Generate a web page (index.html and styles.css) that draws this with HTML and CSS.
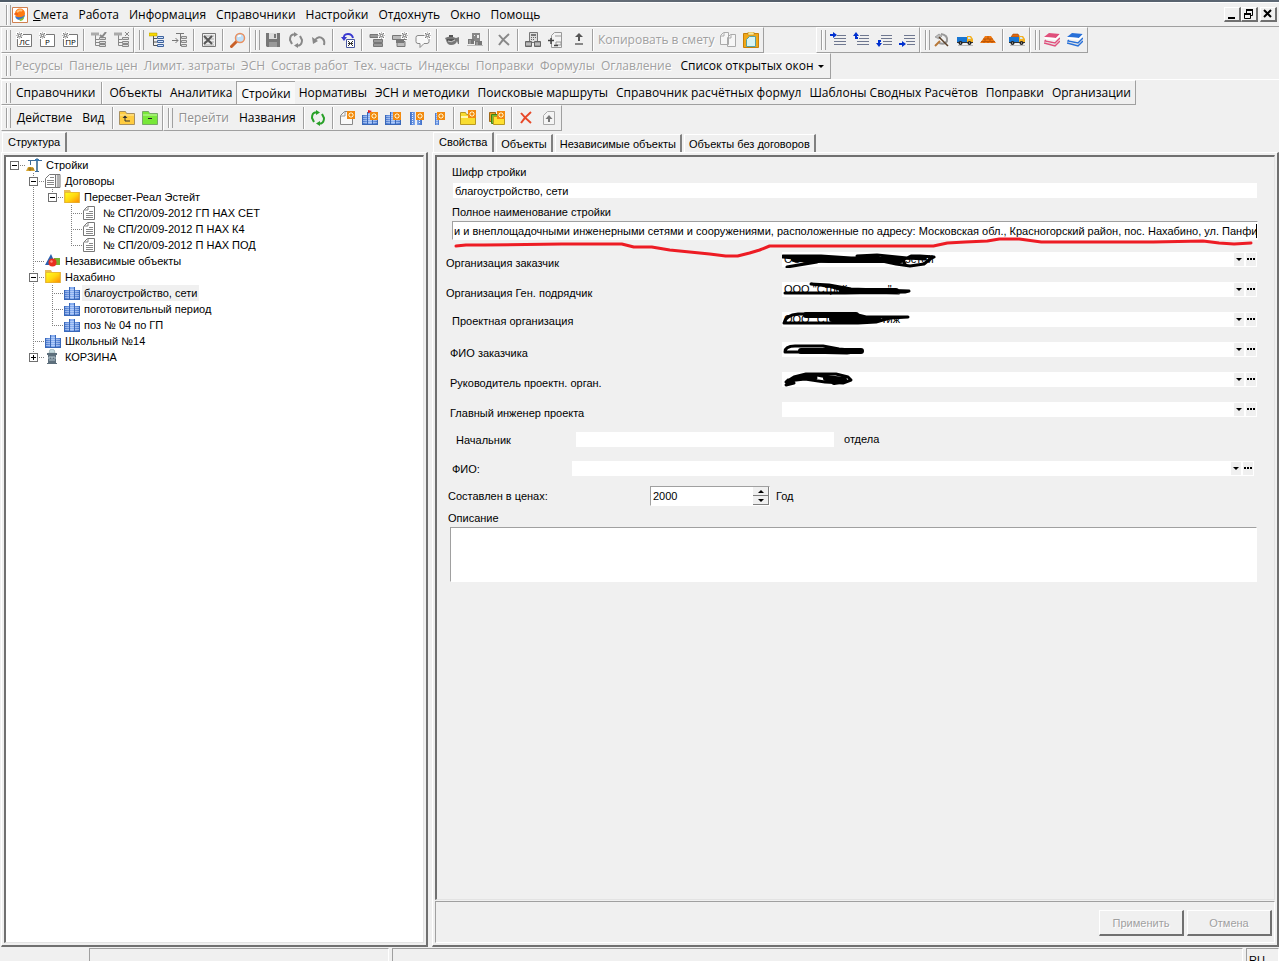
FILE: index.html
```html
<!DOCTYPE html>
<html lang="ru">
<head>
<meta charset="UTF-8">
<meta name="viewport" content="width=device-width, initial-scale=1.0">
<title>Стройки</title>
<link rel="stylesheet" href="styles.css">
</head>
<body>
<svg class="sprite" aria-hidden="true">
    <defs>
        <linearGradient id="gold" x1="0" y1="0" x2="1" y2="1"><stop offset="0" stop-color="#ffff20"/><stop offset=".5" stop-color="#ffd810"/><stop offset="1" stop-color="#ff8a00"/></linearGradient>
        <linearGradient id="blue"><stop offset="0" stop-color="#3f6fc8"/><stop offset=".5" stop-color="#8fb4f4"/><stop offset="1" stop-color="#3f6fc8"/></linearGradient>
    </defs>
    <symbol id="gear" viewBox="0 0 7 7"><path d="M0 0h7v7H0z" fill="#fff"/><path d="M1 1l1 1M6 1L5 2M1 6l1-1M6 6L5 5M3 0h1M3 7h1M0 3v1M7 3v1" stroke="#777"/><rect x="1.5" y="1.5" width="4" height="4" rx="1" fill="#999"/><path d="M3 3h1v1H3z" fill="#fff"/></symbol>
    <symbol id="star" viewBox="0 0 8 8"><path d="M0 0h8v8H0z" fill="#f28a10"/><path d="M4 1v6M1 4h6M2 2l4 4M6 2L2 6" stroke="#fff3c8"/><path d="M3 3h2v2H3z" fill="#f28a10"/></symbol>
    <symbol id="app" viewBox="0 0 16 16"><path d="M.5.5h15v15H.5z" fill="#fff" stroke="#d08050"/><circle cx="8" cy="6.500" r="5" fill="#ff7a10"/><path d="M3 9q5 3 10-1-1 5-5 5-4 0-5-4z" fill="#3a72c8"/><path d="M7 12q4 0 5-3v2q-1 3-4 3z" fill="#8ac43a"/><path d="M5 5q3-3 5-1" fill="none" stroke="#ffc080" stroke-width="2"/><path d="M2 7h4" stroke="#e84818"/></symbol>
    <symbol id="box" viewBox="0 0 16 16"><path d="M1.500 2.500h14v12h-14z" fill="#fff" stroke="#777"/><use href="#gear" x="0" y="0" width="7" height="7"/></symbol>
    <symbol id="tree" viewBox="0 0 16 16"><path d="M4.500 2v11.500H8M4.500 7.500H8M4.500 10.500H8" fill="none" stroke="#888"/><path d="M0 .5h8v3H0z" fill="#aaa"/><path d="M8.500 5.500h6v2h-6zM8.500 9.500h6v2h-6zM8.500 12.500h6v2h-6z" fill="#ddd" stroke="#888"/></symbol>
    <symbol id="tree-ok" viewBox="0 0 16 16"><use href="#tree"/><path d="M9 3l2 2 4-5" fill="none" stroke="#888" stroke-width="2"/></symbol>
    <symbol id="tree-no" viewBox="0 0 16 16"><use href="#tree"/><path d="M11 0l4 4M15 0l-4 4" stroke="#888"/></symbol>
    <symbol id="tree-color" viewBox="0 0 16 16"><path d="M4.500 3v10.500H8M4.500 6.500H8M4.500 10H8" fill="none" stroke="#555"/><path d="M0 1h8v3H0z" fill="#f8d800" stroke="#a89000" stroke-width=".5"/><path d="M8.500 4.500h6v2h-6zM8.500 8.500h6v2h-6zM8.500 12.500h6v2h-6z" fill="#cfe2ff" stroke="#3f639c"/></symbol>
    <symbol id="tree-in" viewBox="0 0 16 16"><path d="M0 8.500h6M3.500 6L6 8.500 3.500 11M4 1.500h8M8.500 2v12" fill="none" stroke="#777"/><path d="M9.500 4.500h5v2h-5zM9.500 8.500h5v2h-5zM9.500 12.500h5v2h-5z" fill="#ddd" stroke="#888"/></symbol>
    <symbol id="excel" viewBox="0 0 16 16"><path d="M1.500 1.500h13v13h-13z" fill="#eee" stroke="#777"/><path d="M3 4h10M3 7h10M3 10h10M3 13h10" stroke="#aaa"/><path d="M3 4l8 8M11 4l-8 8" stroke="#555" stroke-width="2"/></symbol>
    <symbol id="find" viewBox="0 0 16 16"><path d="M1.500 14.500L7 9" stroke="#c86028" stroke-width="3" stroke-linecap="round"/><circle cx="10" cy="6" r="4.500" fill="#bfe0fa" stroke="#e89060" stroke-width="1.500"/><path d="M8 5q1-2 3-1" fill="none" stroke="#fff" stroke-width="1.500"/></symbol>
    <symbol id="save" viewBox="0 0 16 16"><path d="M1 1h14v14H2l-1-1z" fill="#777"/><path d="M4 1h8v6H4z" fill="#ddd"/><path d="M9 2h2v4H9z" fill="#777"/><path d="M4 10h8v5H4z" fill="#999"/></symbol>
    <symbol id="refresh" viewBox="0 0 16 16"><path d="M7 2.500H5Q2 3 2 8l2 4M9 13.500h2q3-1 3-5.500l-2-4" fill="none" stroke="currentColor" stroke-width="2"/><path d="M6 0l4 2.500L6 5zM10 11v5l-4-2.500z" fill="currentColor"/></symbol>
    <symbol id="undo" viewBox="0 0 16 16"><path d="M4 8q4-5 8-1 2 2 1 6" fill="none" stroke="#888" stroke-width="2"/><path d="M1 5l1 7 5-3z" fill="#888"/></symbol>
    <symbol id="recalc" viewBox="0 0 16 16"><path d="M4 7q-1-5 4-5 4 0 5 4" fill="none" stroke="#3838d0" stroke-width="2"/><path d="M1 5h6L4 9z" fill="#3838d0"/><path d="M6.500 7.500h8v8h-8z" fill="#fff" stroke="#4858a0"/><path d="M8 9l5 5M13 9l-5 5M8 11.500h5" stroke="#333"/></symbol>
    <symbol id="rows" viewBox="0 0 16 16"><path d="M1 2.500h12v3H1zM4.500 7.500h9v3h-9zM4.500 11.500h9v3h-9z" fill="#999" stroke="#777"/><use href="#gear" x="9" y="0" width="7" height="7"/></symbol>
    <symbol id="rows2" viewBox="0 0 16 16"><path d="M.5 3.500h14v4H.5zM5 9.500h8v5H5z" fill="#bbb" stroke="#777"/><path d="M4 8h8v3H4z" fill="#777"/><use href="#gear" x="9" y="0" width="7" height="7"/></symbol>
    <symbol id="note" viewBox="0 0 16 16"><path d="M3 3.500h9q2 0 2 2v4q0 2-2 2H9l-4 4v-4H3q-2 0-2-2v-4q0-2 2-2z" fill="#f8f8f8" stroke="#888"/><use href="#gear" x="9" y="0" width="7" height="7"/></symbol>
    <symbol id="pot" viewBox="0 0 16 16"><path d="M1 6q5-3 11 0l3-1v7h-1l-1-3q-1 4-6 4-4 0-5-5z" fill="#777"/><path d="M5 4h4M3 8h7" stroke="#555" stroke-width="2"/><path d="M4 9q3 2 7-1" stroke="#ccc" fill="none"/></symbol>
    <symbol id="plant" viewBox="0 0 16 16"><path d="M5 1h8v8H5z" fill="#888"/><path d="M7 3h1v1H7zM10 3h2v3h-2z" fill="#eee"/><path d="M1 7h6v5H1zM8 9h7v5H8z" fill="#777"/><path d="M0 13.500h16M3 8v4M10 10v3" stroke="#bbb"/></symbol>
    <symbol id="cross" viewBox="0 0 16 16"><path d="M3 3q4 5 10 10M13 2Q7 7 3 13" fill="none" stroke="currentColor" stroke-width="2"/></symbol>
    <symbol id="calc" viewBox="0 0 16 16"><path d="M4.500.5h8v10h-8z" fill="#ddd" stroke="#777"/><path d="M6 2h5v2H6z" fill="#777"/><path d="M6 5.500h1M8 5.500h1M10 5.500h1M6 7.500h1M8 7.500h1" stroke="#666"/><path d="M.5 9.500h6v5h-6zM9.500 9.500h6v5h-6z" fill="#999" stroke="#666"/><path d="M1 12h5M10 12h5" stroke="#ddd"/></symbol>
    <symbol id="plusdoc" viewBox="0 0 16 16"><path d="M3.500 3.500l3-3h7v15h-10z" fill="#f4f4f4" stroke="#999"/><path d="M7 4h6M8 10h5v3H8z" fill="none" stroke="#999"/><path d="M0 8.500h6M3 6v6M6 13.500h4" stroke="#444" stroke-width="1.500"/></symbol>
    <symbol id="updown" viewBox="0 0 16 16"><path d="M8 1l4 4H9v4H7V5H4z" fill="#555"/><path d="M4 11h8v2H4z" fill="#888"/></symbol>
    <symbol id="copy" viewBox="0 0 16 16"><path d="M.5 3.500l3-3h5v12h-8zM7.500 5.500l3-3h5v12h-8z" fill="#f6f6f6" stroke="#aaa"/><path d="M1 4h3V1M8 6h3V3" fill="none" stroke="#aaa"/></symbol>
    <symbol id="paste" viewBox="0 0 16 16"><path d="M.5 1.500h15v14H.5z" fill="#f0a818" stroke="#c88008"/><path d="M5 0h6v3H5z" fill="#ffe890" stroke="#b08020" stroke-width=".5"/><path d="M3.500 7.500l3-3h6v10h-9z" fill="#d8f4f4" stroke="#58a0a0"/></symbol>
    <symbol id="ind1" viewBox="0 0 16 16"><path d="M7 3.500h9M4 6.500h12M4 9.500h12M4 12.500h12" stroke="#6f7890"/><path d="M0 3h4" stroke="#0030d0" stroke-width="2"/><path d="M3 0l4 3-4 3z" fill="#0030d0"/></symbol>
    <symbol id="ind2" viewBox="0 0 16 16"><path d="M7 3.500h9M6 6.500h10M4 9.500h12M4 12.500h12" stroke="#6f7890"/><path d="M3 2v4h2" fill="none" stroke="#0030d0" stroke-width="2"/><path d="M0 4l3-4 3 4z" fill="#0030d0"/></symbol>
    <symbol id="ind3" viewBox="0 0 16 16"><path d="M5 3.500h11M5 6.500h11M7 9.500h9M7 12.500h9" stroke="#6f7890"/><path d="M5 9H3v3" fill="none" stroke="#0030d0" stroke-width="2"/><path d="M0 11h6l-3 4z" fill="#0030d0"/></symbol>
    <symbol id="ind4" viewBox="0 0 16 16"><path d="M5 3.500h11M5 6.500h11M7 9.500h9M8 12.500h8" stroke="#6f7890"/><path d="M0 12h4" stroke="#0030d0" stroke-width="2"/><path d="M3 9l4 3-4 3z" fill="#0030d0"/></symbol>
    <symbol id="hammer" viewBox="0 0 16 16"><path d="M7 2q7 1 6 7-2 4-8 2" fill="none" stroke="#999" stroke-width="2"/><path d="M1 5l4-3 3 2-3 3z" fill="#bbb" stroke="#777" stroke-width=".5"/><path d="M5 5l9 9" stroke="#5b4028" stroke-width="1.500"/><path d="M1 14l5-5" stroke="#b87838" stroke-width="2"/></symbol>
    <symbol id="truck" viewBox="0 0 16 16"><path d="M1 13.500h15" stroke="#bbb"/><path d="M0 5h10v6H0z" fill="#1976d2"/><path d="M10 4h4l2 3v4h-6z" fill="#f4b020"/><path d="M11 5h2l1 2h-3z" fill="#d0e8f8"/><path d="M0 10h16v1H0z" fill="#333"/><circle cx="3.500" cy="11" r="2" fill="#222"/><circle cx="12.500" cy="11" r="2" fill="#222"/><path d="M3 11h1M12 11h1" stroke="#ddd"/></symbol>
    <symbol id="bricks" viewBox="0 0 16 16"><path d="M5 4h6l2 3 3 4H0l3-4z" fill="#f07810"/><path d="M3 7h10M1 9.500h14M8 4v3M5 7v2M10 7v2M4 10v1M8 10v1M12 10v1" stroke="#a84800" stroke-width=".7"/></symbol>
    <symbol id="truck-load" viewBox="0 0 16 16"><path d="M2 5l2-3h5l2 3z" fill="#e06810" stroke="#904000" stroke-width=".5"/><use href="#truck"/></symbol>
    <symbol id="books" viewBox="0 0 16 16"><path d="M5 1l11 1-4 4-12-1z" fill="currentColor"/><path d="M0 5l12 1v2L1 7zM12 6l4-4v2l-4 4z" fill="#fff"/><path d="M2 8l-1 1 10 2 5-5" fill="none" stroke="currentColor" stroke-width="1.500"/><path d="M1 10l10 2v1L1 11z" fill="#ddd"/><path d="M0 11l11 3 5-5" fill="none" stroke="currentColor" stroke-width="1.500"/></symbol>
    <symbol id="fold-up" viewBox="0 0 16 16"><path d="M.5 14.500v-13h6l1 2h8v11z" fill="#ffcc40" stroke="#a89060"/><path d="M1 5h14" stroke="#ffe8a0"/><path d="M6 6v5h5" fill="none" stroke="#333"/><path d="M3.500 8L6 5.500 8.500 8z" fill="#333"/></symbol>
    <symbol id="fold-minus" viewBox="0 0 16 16"><path d="M.5 14.500v-13h6l1 2h8v11z" fill="#78e838" stroke="#78a868"/><path d="M1 5h14" stroke="#c8f8a8"/><path d="M6 8.500h4" stroke="#222"/></symbol>
    <symbol id="newdoc" viewBox="0 0 16 16"><path d="M1.500 5.500l4-4h8v13h-12z" fill="#f8f8f8" stroke="#888"/><path d="M2 6h4V2" fill="none" stroke="#999"/><use href="#star" x="8" y="1" width="8" height="8"/></symbol>
    <symbol id="city" viewBox="0 0 16 16"><path d="M0 5h5v10H0zM5 2h6v13H5zM11 5h5v10h-5z" fill="url(#blue)"/><path d="M2 6v8M4 6v8M7 4v10M9 4v10M12 6v8M14 6v8" stroke="#dce9ff" stroke-dasharray="1 1"/><path d="M.5 5v10M5.500 2v13M10.500 2v13M15.500 5v10M0 14.500h16" stroke="#3a68b8" fill="none"/></symbol>
    <symbol id="city-flag" viewBox="0 0 16 16"><use href="#city"/><path d="M6 3V0l4 1-3 2" fill="#e02020"/><use href="#star" x="8" y="2" width="8" height="8"/></symbol>
    <symbol id="city-new" viewBox="0 0 16 16"><use href="#city"/><use href="#star" x="8" y="2" width="8" height="8"/></symbol>
    <symbol id="tower-new" viewBox="0 0 16 16"><path d="M2 2h5v13H2zM9 9h5v6H9z" fill="url(#blue)"/><path d="M4.500 3v11M11.500 10v4" stroke="#e8f2ff" stroke-dasharray="1 1"/><use href="#star" x="8" y="2" width="8" height="8"/></symbol>
    <symbol id="part-new" viewBox="0 0 16 16"><path d="M4 3h4v12H4z" fill="url(#blue)"/><path d="M6 4v10" stroke="#e8f2ff" stroke-dasharray="1 1"/><use href="#star" x="6" y="2" width="8" height="8"/></symbol>
    <symbol id="fold-new" viewBox="0 0 16 16"><path d="M.5 14.500v-12h5l1 2h9v10z" fill="#f8dc30" stroke="#b89820"/><path d="M1 7h14" stroke="#fff8b0" stroke-width="2"/><use href="#star" x="8" y="0" width="8" height="8"/></symbol>
    <symbol id="folds-new" viewBox="0 0 16 16"><path d="M.5 2.500h6v9h-6z" fill="#f0a020" stroke="#a06818"/><path d="M2.500 4.500h6v9h-6z" fill="#70c030" stroke="#408018"/><path d="M4.500 6.500h11v8h-11z" fill="#ffe030" stroke="#b89820"/><use href="#star" x="8" y="1" width="8" height="8"/></symbol>
    <symbol id="doc-up" viewBox="0 0 16 16"><path d="M2.500 5.500l4-4h7v13h-11z" fill="#f4f4f4" stroke="#aaa"/><path d="M8 12V7" stroke="#777" stroke-width="2"/><path d="M4.500 9L8 5l3.500 4z" fill="#777"/></symbol>
    <symbol id="crane" viewBox="0 0 16 16"><path d="M2 3.500h14M4.500 3v5M9 14.500h4" stroke="#3f6c98" fill="none"/><path d="M10 2h2v12h-2z" fill="#88b0d0"/><path d="M11 1v13" stroke="#345c80"/><path d="M9 2h4v2H9z" fill="#3878b0"/><path d="M0 14l2-4h5l2 4z" fill="#d8a830"/><path d="M2 12h6M4 10v4" stroke="#906818"/></symbol>
    <symbol id="docs" viewBox="0 0 16 16"><path d="M10 1.500h5v13h-5M13 1v13" fill="#eee" stroke="#777"/><path d="M.5 5.500l4-4h6v13H.5z" fill="#fff" stroke="#777"/><path d="M5 4.500h4M2 7.500h7M2 9.500h7M2 11.500h7" stroke="#888"/></symbol>
    <symbol id="folder" viewBox="0 0 16 16"><path d="M0 4V1h6l1 2h9v11H0z" fill="#e8bc58"/><path d="M1 3.500h14v10H1z" fill="url(#gold)" stroke="#e0a820" stroke-width=".5"/></symbol>
    <symbol id="page" viewBox="0 0 16 16"><path d="M.5 5.500l4-4h7v13H.5z" fill="#fff" stroke="#777"/><path d="M1 5h4V2M6 6.500h4M3 8.500h7M3 10.500h7M3 12.500h7" fill="none" stroke="#888"/></symbol>
    <symbol id="shapes" viewBox="0 0 16 16"><path d="M9 5h6v7H9z" fill="#78b030"/><path d="M6 1l5 11H0z" fill="#2860b0"/><circle cx="7.500" cy="9.500" r="4" fill="#e83020"/><circle cx="6.500" cy="8.500" r="1.200" fill="#ff9080"/></symbol>
    <symbol id="bin" viewBox="0 0 16 16"><path d="M4 4q0-4 3-4t3 4z" fill="#c8dce0" stroke="#80989c" stroke-width=".5"/><path d="M2 4h10v2H2zM3 6h8v8H3zM2 14h10v1H2z" fill="#5d6f7c"/><path d="M5 7v6M7 7v6M9 7v6M3 9h8" stroke="#b8c8d0" stroke-dasharray="2 1"/></symbol>
</svg>

<div class="strip"></div>

<nav class="bar menu">
    <div class="group">
        <svg class="logo"><use href="#app"/></svg>
        <a href="#"><u>С</u>мета</a>
        <a href="#">Работа</a>
        <a href="#">Информация</a>
        <a href="#">Справочники</a>
        <a href="#">Настройки</a>
        <a href="#">Отдохнуть</a>
        <a href="#">Окно</a>
        <a href="#">Помощь</a>
    </div>
    <div class="window-buttons">
        <button type="button" aria-label="Свернуть"><svg viewBox="0 0 12 12"><path d="M2 10h7" stroke="#000" stroke-width="2"/></svg></button>
        <button type="button" aria-label="Восстановить"><svg viewBox="0 0 12 12"><path d="M3 2h7M1 6h7" stroke="#000" stroke-width="2"/><path d="M3.500 3v2M9.500 3v4.500H8M1.500 7v3.500h6V7" fill="none" stroke="#000"/></svg></button>
        <button type="button" class="close" aria-label="Закрыть"><svg viewBox="0 0 12 12"><path d="M2 2l7 7M9 2L2 9" stroke="#000" stroke-width="2"/></svg></button>
    </div>
</nav>

<div class="bar">
    <div class="group">
        <button type="button" class="tool lettered"><svg><use href="#box"/></svg><span>ЛС</span></button>
        <button type="button" class="tool lettered"><svg><use href="#box"/></svg><span>Р</span></button>
        <button type="button" class="tool lettered"><svg><use href="#box"/></svg><span>ПР</span></button>
        <i class="sep"></i>
        <button type="button" class="tool" aria-label="Отметить"><svg><use href="#tree-ok"/></svg></button>
        <button type="button" class="tool" aria-label="Снять отметку"><svg><use href="#tree-no"/></svg></button>
    </div>
    <div class="group">
        <button type="button" class="tool" aria-label="Структура"><svg><use href="#tree-color"/></svg></button>
        <button type="button" class="tool" aria-label="Вставить в структуру"><svg><use href="#tree-in"/></svg></button>
        <i class="sep"></i>
        <button type="button" class="tool" aria-label="Excel"><svg><use href="#excel"/></svg></button>
        <i class="sep"></i>
        <button type="button" class="tool" aria-label="Поиск"><svg><use href="#find"/></svg></button>
    </div>
    <div class="group">
        <button type="button" class="tool" aria-label="Сохранить"><svg><use href="#save"/></svg></button>
        <button type="button" class="tool gray" aria-label="Обновить"><svg><use href="#refresh"/></svg></button>
        <button type="button" class="tool" aria-label="Отменить"><svg><use href="#undo"/></svg></button>
        <i class="sep"></i>
        <button type="button" class="tool" aria-label="Пересчитать"><svg><use href="#recalc"/></svg></button>
        <i class="sep"></i>
        <button type="button" class="tool" aria-label="Новый раздел"><svg><use href="#rows"/></svg></button>
        <button type="button" class="tool" aria-label="Новая строка"><svg><use href="#rows2"/></svg></button>
        <button type="button" class="tool" aria-label="Комментарий"><svg><use href="#note"/></svg></button>
        <i class="sep"></i>
        <button type="button" class="tool" aria-label="Материалы"><svg><use href="#pot"/></svg></button>
        <button type="button" class="tool" aria-label="Оборудование"><svg><use href="#plant"/></svg></button>
        <i class="sep"></i>
        <button type="button" class="tool gray" aria-label="Удалить"><svg><use href="#cross"/></svg></button>
        <i class="sep"></i>
        <button type="button" class="tool" aria-label="Калькулятор"><svg><use href="#calc"/></svg></button>
        <button type="button" class="tool" aria-label="Поправка"><svg><use href="#plusdoc"/></svg></button>
        <button type="button" class="tool" aria-label="Сдвиг"><svg><use href="#updown"/></svg></button>
        <i class="sep"></i>
        <button type="button" class="text-tool copy-to" disabled>Копировать в смету</button>
        <button type="button" class="tool" aria-label="Копировать"><svg><use href="#copy"/></svg></button>
        <button type="button" class="tool" aria-label="Вставить"><svg><use href="#paste"/></svg></button>
    </div>
    <div class="group apart">
        <button type="button" class="tool" aria-label="Уровень 1"><svg><use href="#ind1"/></svg></button>
        <button type="button" class="tool" aria-label="Уровень 2"><svg><use href="#ind2"/></svg></button>
        <button type="button" class="tool" aria-label="Уровень 3"><svg><use href="#ind3"/></svg></button>
        <button type="button" class="tool" aria-label="Уровень 4"><svg><use href="#ind4"/></svg></button>
    </div>
    <div class="group">
        <button type="button" class="tool" aria-label="Работы"><svg><use href="#hammer"/></svg></button>
        <button type="button" class="tool" aria-label="Машины"><svg><use href="#truck"/></svg></button>
        <button type="button" class="tool" aria-label="Кирпич"><svg><use href="#bricks"/></svg></button>
        <i class="sep"></i>
        <button type="button" class="tool" aria-label="Перевозка"><svg><use href="#truck-load"/></svg></button>
    </div>
    <div class="group">
        <button type="button" class="tool pink" aria-label="Сборники"><svg><use href="#books"/></svg></button>
        <button type="button" class="tool azure" aria-label="Каталоги"><svg><use href="#books"/></svg></button>
    </div>
</div>

<div class="bar panels">
    <div class="group">
        <button type="button" disabled>Ресурсы</button>
        <button type="button" disabled>Панель цен</button>
        <button type="button" disabled>Лимит. затраты</button>
        <button type="button" disabled>ЭСН</button>
        <button type="button" disabled>Состав работ</button>
        <button type="button" disabled>Тех. часть</button>
        <button type="button" disabled>Индексы</button>
        <button type="button" disabled>Поправки</button>
        <button type="button" disabled>Формулы</button>
        <button type="button" disabled>Оглавление</button>
        <button type="button" class="windows">Список открытых окон<i class="arrow"></i></button>
    </div>
</div>

<nav class="bar books">
    <div class="group">
        <a href="#">Справочники</a>
        <i class="sep"></i>
        <a href="#">Объекты</a>
        <a href="#">Аналитика</a>
        <a href="#" class="pressed">Стройки</a>
        <a href="#">Нормативы</a>
        <a href="#">ЭСН и методики</a>
        <a href="#">Поисковые маршруты</a>
        <a href="#">Справочник расчётных формул</a>
        <a href="#">Шаблоны Сводных Расчётов</a>
        <a href="#">Поправки</a>
        <a href="#">Организации</a>
    </div>
</nav>

<div class="bar actions">
    <div class="group">
        <button type="button" class="text-tool">Действие</button>
        <button type="button" class="text-tool">Вид</button>
        <i class="sep"></i>
        <button type="button" class="tool" aria-label="На уровень вверх"><svg><use href="#fold-up"/></svg></button>
        <button type="button" class="tool" aria-label="Свернуть всё"><svg><use href="#fold-minus"/></svg></button>
    </div>
    <div class="group">
        <button type="button" class="text-tool pale" disabled>Перейти</button>
        <button type="button" class="text-tool">Названия</button>
        <i class="sep"></i>
        <button type="button" class="tool green" aria-label="Обновить"><svg><use href="#refresh"/></svg></button>
        <i class="sep"></i>
        <button type="button" class="tool" aria-label="Новый документ"><svg><use href="#newdoc"/></svg></button>
        <button type="button" class="tool" aria-label="Новая стройка"><svg><use href="#city-flag"/></svg></button>
        <button type="button" class="tool" aria-label="Новая очередь"><svg><use href="#city-new"/></svg></button>
        <button type="button" class="tool" aria-label="Новый объект"><svg><use href="#tower-new"/></svg></button>
        <button type="button" class="tool" aria-label="Новая часть"><svg><use href="#part-new"/></svg></button>
        <i class="sep"></i>
        <button type="button" class="tool" aria-label="Новая папка"><svg><use href="#fold-new"/></svg></button>
        <i class="sep"></i>
        <button type="button" class="tool" aria-label="Новая группа папок"><svg><use href="#folds-new"/></svg></button>
        <i class="sep"></i>
        <button type="button" class="tool red" aria-label="Удалить"><svg><use href="#cross"/></svg></button>
        <button type="button" class="tool" aria-label="Выгрузить"><svg><use href="#doc-up"/></svg></button>
    </div>
</div>

<main>
    <section class="pane">
        <div class="tabs">
            <button type="button" class="active">Структура</button>
        </div>
        <div class="frame">
            <ul class="tree">
                <li>
                    <div class="node"><button type="button" aria-label="Свернуть"></button><svg><use href="#crane"/></svg><span>Стройки</span></div>
                    <ul>
                        <li>
                            <div class="node"><button type="button" aria-label="Свернуть"></button><svg><use href="#docs"/></svg><span>Договоры</span></div>
                            <ul>
                                <li>
                                    <div class="node"><button type="button" aria-label="Свернуть"></button><svg><use href="#folder"/></svg><span>Пересвет-Реал Эстейт</span></div>
                                    <ul>
                                        <li><div class="node"><svg><use href="#page"/></svg><span>№ СП/20/09-2012 ГП НАХ СЕТ</span></div></li>
                                        <li><div class="node"><svg><use href="#page"/></svg><span>№ СП/20/09-2012 П НАХ К4</span></div></li>
                                        <li><div class="node"><svg><use href="#page"/></svg><span>№ СП/20/09-2012 П НАХ ПОД</span></div></li>
                                    </ul>
                                </li>
                            </ul>
                        </li>
                        <li><div class="node"><svg><use href="#shapes"/></svg><span>Независимые объекты</span></div></li>
                        <li>
                            <div class="node"><button type="button" aria-label="Свернуть"></button><svg><use href="#folder"/></svg><span>Нахабино</span></div>
                            <ul>
                                <li><div class="node selected"><svg><use href="#city"/></svg><span>благоустройство, сети</span></div></li>
                                <li><div class="node"><svg><use href="#city"/></svg><span>поготовительный период</span></div></li>
                                <li><div class="node"><svg><use href="#city"/></svg><span>поз № 04 по ГП</span></div></li>
                            </ul>
                        </li>
                        <li><div class="node"><svg><use href="#city"/></svg><span>Школьный №14</span></div></li>
                        <li><div class="node"><button type="button" class="plus" aria-label="Развернуть"></button><svg><use href="#bin"/></svg><span>КОРЗИНА</span></div></li>
                    </ul>
                </li>
            </ul>
        </div>
    </section>

    <section class="pane">
        <div class="tabs">
            <button type="button" class="active">Свойства</button>
            <button type="button">Объекты</button>
            <button type="button">Независимые объекты</button>
            <button type="button">Объекты без договоров</button>
        </div>
        <form class="frame">
            <div class="fields">
                <div class="stack">
                    <label for="code">Шифр стройки</label>
                    <input id="code" type="text" value="благоустройство, сети">
                </div>
                <div class="stack">
                    <label for="fullname">Полное наименование стройки</label>
                    <input id="fullname" class="sunken" type="text" value="и и внеплощадочными инженерными сетями и сооружениями, расположенные по адресу: Московская обл., Красногорский район, пос. Нахабино, ул. Панфи">
                    <i class="caret"></i>
                    <svg class="underline" viewBox="0 0 806 24" preserveAspectRatio="none"><path d="M4 12l10-1h18l78-1h60l12 3h18l18 3 20 2 20 2 16 2h12l12-3 10-3 10-4h30l134 0 14-3 18-1 22-1 12-2h20l22 3h112l50-1 16 2 15 1 17-1"/></svg>
                </div>
                <div class="row near">
                    <label for="customer">Организация заказчик</label>
                    <div class="lookup">
                        <input id="customer" type="text" value='ООО "                             эстей'>
                        <button type="button" aria-label="Список"><i class="arrow"></i></button><button type="button" aria-label="Выбрать"><i class="dots"></i></button>
                        <svg class="scribble" viewBox="0 0 160 16"><path d="M1 4l38 0 60 4-60 1-34 6 30-5M1 5l44 4 55 0 14 3 14 2 14-2 6-5 4-2-14-1-9 0-8 4 2 4M36 6h60l16 5M75 4l20-1 30 3 18 1"/><path d="M12 7l35 1 72 0" class="fat"/></svg>
                    </div>
                </div>
                <div class="row near">
                    <label for="contractor">Организация Ген. подрядчик</label>
                    <div class="lookup">
                        <input id="contractor" type="text" value='ООО "Строй             "'>
                        <button type="button" aria-label="Список"><i class="arrow"></i></button><button type="button" aria-label="Выбрать"><i class="dots"></i></button>
                        <svg class="scribble" viewBox="0 0 160 16"><path d="M3 11h60l60-1 4-1-58-2-22-4-18-1 18 2 20 6 50 1"/><path d="M60 9l54 0" class="fat"/></svg>
                    </div>
                </div>
                <div class="row mid">
                    <label for="designer">Проектная организация</label>
                    <div class="lookup">
                        <input id="designer" type="text" value='ООО "Ст                 тиж'>
                        <button type="button" aria-label="Список"><i class="arrow"></i></button><button type="button" aria-label="Выбрать"><i class="dots"></i></button>
                        <svg class="scribble" viewBox="0 0 160 16"><path d="M2 11q2-8 14-9h56l12 3 42 0-18 1-14 4-18 1H3"/><path d="M50 7h46l-20 2H58M24 3h50" class="fat"/></svg>
                    </div>
                </div>
                <div class="row">
                    <label for="customer-name">ФИО заказчика</label>
                    <div class="lookup">
                        <input id="customer-name" type="text" value="">
                        <button type="button" aria-label="Список"><i class="arrow"></i></button><button type="button" aria-label="Выбрать"><i class="dots"></i></button>
                        <svg class="scribble" viewBox="0 0 160 16"><path d="M3 10q0-6 10-6l28 0 16 3 22 2-14 2-44-1H4M20 8h20"/><path d="M19 9h50l10 0" class="fat"/></svg>
                    </div>
                </div>
                <div class="row">
                    <label for="head">Руководитель проектн. орган.</label>
                    <div class="lookup">
                        <input id="head" type="text" value="">
                        <button type="button" aria-label="Список"><i class="arrow"></i></button><button type="button" aria-label="Выбрать"><i class="dots"></i></button>
                        <svg class="scribble" viewBox="0 0 160 16"><path d="M4 13l8-2-8-1 8-5 12-3 30 0 12 3 3 3-8 3-18-1-20-3-18 2 30-6 26 5M6 8l28-2"/><path d="M44 6l18 2-10 2" class="fat"/></svg>
                    </div>
                </div>
                <div class="row">
                    <label for="engineer">Главный инженер проекта</label>
                    <div class="lookup">
                        <input id="engineer" type="text" value="">
                        <button type="button" aria-label="Список"><i class="arrow"></i></button><button type="button" aria-label="Выбрать"><i class="dots"></i></button>
                    </div>
                </div>
                <div class="row chief">
                    <label for="chief">Начальник</label>
                    <input id="chief" type="text">
                    <span>отдела</span>
                </div>
                <div class="row fio">
                    <label for="fio">ФИО:</label>
                    <div class="lookup">
                        <input id="fio" type="text">
                        <button type="button" aria-label="Список"><i class="arrow"></i></button><button type="button" aria-label="Выбрать"><i class="dots"></i></button>
                    </div>
                </div>
                <div class="row year">
                    <label for="year">Составлен в ценах:</label>
                    <div class="spin sunken">
                        <input id="year" type="text" value="2000">
                        <div><button type="button" aria-label="Больше"><i class="arrow up"></i></button><button type="button" aria-label="Меньше"><i class="arrow"></i></button></div>
                    </div>
                    <span>Год</span>
                </div>
                <div class="about">
                    <label for="about">Описание</label>
                    <textarea id="about" class="sunken"></textarea>
                </div>
            </div>
            <div class="footer">
                <button type="submit" disabled>Применить</button>
                <button type="reset" disabled>Отмена</button>
            </div>
        </form>
    </section>
</main>

<footer class="status">
    <div></div>
    <div></div>
    <div>RU</div>
</footer>
</body>
</html>
```
FILE: styles.css
```css
*, *::before {
    box-sizing: border-box;
}
body {
    margin: 0;
    height: 100vh;
    display: flex;
    flex-direction: column;
    overflow: hidden;
    background: #f0f0f0;
    color: #000;
    font-family: "Liberation Sans", Arial, sans-serif;
    font-size: 11px;
}
button, input, textarea {
    font: inherit;
    color: inherit;
    margin: 0;
    padding: 0;
    border: 0;
    border-radius: 0;
    outline: none;
}
button {
    background: none;
    white-space: nowrap;
}
button:disabled {
    color: #a0a0a0;
    text-shadow: 1px 1px #fff;
}
svg {
    width: 16px;
    height: 16px;
    flex: none;
}
.sprite {
    position: absolute;
    width: 0;
    height: 0;
}
.strip {
    height: 2px;
    flex: none;
    background: linear-gradient(90deg, #4e5a66, #6d757e 40%, #4c5663 70%, #5d6874);
}

/* toolbars */
.bar {
    height: 26px;
    flex: none;
    display: flex;
    padding-left: 1px;
    font-family: "Open Sans", "Noto Sans", sans-serif;
    font-size: 12px;
    line-height: 16px;
}
.menu {
    height: 25px;
    justify-content: space-between;
    border-top: 1px solid #fff;
    border-bottom: 1px solid #a0a0a0;
}
.group {
    display: flex;
    align-items: center;
    border: 1px solid #a0a0a0;
    border-top-color: #fff;
    border-left-color: #fff;
    white-space: nowrap;
}
.group::before {
    content: "";
    width: 5px;
    height: 20px;
    margin: 0 1px 0 4px;
    border: solid #a0a0a0;
    border-width: 0 1px;
    background: linear-gradient(90deg, #fff 1px, #f0f0f0 1px);
}
.group.apart {
    margin-left: 52px;
}
.menu .group {
    border: 0;
    padding-left: 1px;
}
.menu a, .books a {
    padding: 0 5px;
    color: #000;
    text-decoration: none;
}
.books .group a {
    padding: 0 4px;
}
.window-buttons {
    display: flex;
    align-items: center;
    padding-right: 2px;
}
.window-buttons button {
    width: 17px;
    height: 15px;
    display: flex;
    align-items: center;
    justify-content: center;
    border: 1px solid #fff;
    border-right: 2px solid #707070;
    border-bottom: 2px solid #707070;
}
.window-buttons .close {
    margin-left: 2px;
}
.window-buttons svg {
    width: 12px;
    height: 12px;
}
.tool {
    width: 23px;
    height: 22px;
    display: flex;
    align-items: center;
    justify-content: center;
}
.lettered {
    display: grid;
    place-items: center;
    place-content: center;
}
.lettered svg, .lettered span {
    grid-area: 1 / 1;
}
.lettered span {
    z-index: 1;
    font-size: 8px;
    line-height: 8px;
    padding: 4px 0 0 2px;
}
.gray { color: #888; }
.pink { color: #e0507c; }
.azure { color: #2870d8; }
.green { color: #28a028; }
.red { color: #e84828; }
.sep {
    width: 2px;
    height: 22px;
    margin: 0 2px;
    border-left: 1px solid #a0a0a0;
    border-right: 1px solid #fff;
}
.text-tool {
    padding: 0 5px;
}
.text-tool.copy-to {
    padding: 0 2px;
}
.text-tool.pale {
    color: #909090;
}
.panels .group button {
    padding: 0 3px;
}
.panels .group .windows {
    padding: 0 6px;
    display: flex;
    align-items: center;
    gap: 5px;
}
.arrow {
    border: 3px solid transparent;
    border-top-color: #000;
    border-bottom: 0;
}
.arrow.up {
    border-top: 0;
    border-bottom: 3px solid #000;
}
.books {
    border-top: 1px solid #fff;
}
.books a.pressed {
    align-self: stretch;
    padding-top: 4px;
    border-left: 1px solid #a0a0a0;
    border-top: 1px solid #a0a0a0;
    background: #f8f8f8;
}

/* panes */
main {
    flex: 1;
    min-height: 0;
    display: grid;
    grid-template-columns: 427px minmax(0, 1fr);
    gap: 4px;
    padding: 1px 0 1px 1px;
}
.pane {
    display: flex;
    flex-direction: column;
    min-height: 0;
}
.tabs {
    display: flex;
    align-items: flex-end;
    gap: 2px;
    padding-left: 1px;
    height: 20px;
}
.tabs button {
    height: 18px;
    padding: 0 4px;
    border-top: 1px solid #fff;
    border-left: 1px solid #fff;
    border-right: 2px solid #808080;
}
.tabs .active {
    height: 20px;
    padding: 0 5px 2px;
}
.frame {
    flex: 1;
    min-height: 0;
    display: flex;
    flex-direction: column;
    padding: 2px;
    border: 1px solid #fff;
    border-right: 2px solid #707070;
    border-bottom: 2px solid #707070;
}
.tree, .fields {
    flex: 1;
    border: 2px solid #707070;
    border-right: 1px solid #e3e3e3;
    border-bottom: 1px solid #e3e3e3;
}

/* tree */
.tree, .tree ul {
    list-style: none;
    margin: 0;
    padding: 0 0 0 19px;
}
.tree {
    padding: 0;
    background: #fff;
}
.tree li li {
    background: repeating-linear-gradient(#808080 0 1px, transparent 1px 2px) 8px 0 / 1px 100% no-repeat;
}
.tree li li:last-child {
    background-size: 1px 8px;
}
.node {
    height: 16px;
    display: flex;
    align-items: center;
    padding-left: 20px;
    background: repeating-linear-gradient(90deg, #808080 0 1px, transparent 1px 2px) 8px 8px / 12px 1px no-repeat;
}
.node button {
    width: 9px;
    height: 9px;
    margin: 0 7px 0 -16px;
    border: 1px solid #707070;
    background: linear-gradient(#000, #000) center / 5px 1px no-repeat #fff;
}
.node .plus {
    background: linear-gradient(#000, #000) center / 5px 1px no-repeat, linear-gradient(#000, #000) center / 1px 5px no-repeat #fff;
}
.node span {
    margin-left: 2px;
    padding: 0 2px;
    line-height: 16px;
    white-space: nowrap;
}
.node.selected span {
    background: #f0f0f0;
}

/* properties form */
.fields {
    padding: 7px 17px 0 15px;
}
.fields input {
    height: 15px;
    min-width: 0;
    padding: 0 2px;
    background: #fff;
}
.fields label {
    white-space: nowrap;
}
.sunken {
    border: 1px solid #fff;
    border-top-color: #a0a0a0;
    border-left-color: #a0a0a0;
}
.stack {
    display: flex;
    flex-direction: column;
    position: relative;
    height: 40px;
}
.stack label {
    line-height: 16px;
    margin-bottom: 3px;
}
.stack input {
    margin-left: 1px;
}
.stack .sunken {
    height: 19px;
    margin: -2px -1px 0 0;
    padding: 0 1px;
    text-align: right;
}
.caret {
    position: absolute;
    right: 0;
    top: 20px;
    height: 14px;
    border-left: 1px solid #000;
}
.underline {
    position: absolute;
    left: 0;
    top: 30px;
    width: 100%;
    height: 24px;
}
.underline path {
    fill: none;
    stroke: #ed1c24;
    stroke-width: 3;
    stroke-linejoin: round;
    stroke-linecap: round;
}
.row {
    display: flex;
    align-items: center;
    height: 30px;
    margin-left: -2px;
}
.row label {
    width: 332px;
    padding-top: 8px;
}
.row.near {
    margin-left: -6px;
}
.row.near label {
    width: 336px;
}
.row.mid {
    margin-left: 0;
}
.row.mid label {
    width: 330px;
    padding-top: 4px;
}
.lookup {
    flex: 1;
    display: flex;
    position: relative;
    background: #fff;
}
.lookup input {
    flex: 1;
    white-space: pre;
}
.lookup button {
    width: 10px;
    height: 13px;
    margin: 1px 1px 1px 1px;
    display: flex;
    align-items: center;
    justify-content: center;
    background: #f0f0f0;
}
.dots {
    width: 8px;
    height: 2px;
    background: repeating-linear-gradient(90deg, #000 0 2px, transparent 2px 3px);
}
.scribble {
    position: absolute;
    left: 0;
    top: 0;
    width: 160px;
}
.scribble path {
    fill: none;
    stroke: #000;
    stroke-width: 3;
    stroke-linejoin: round;
    stroke-linecap: round;
}
.scribble .fat {
    stroke-width: 6;
}
.row.chief, .row.fio {
    margin-left: 0;
    height: 28px;
}
.row.chief {
    height: 30px;
    padding-left: 4px;
}
.row.chief label, .row.fio label {
    width: 120px;
    padding-top: 2px;
}
.row.chief input {
    width: 258px;
    margin-right: 10px;
}
.row.fio .lookup {
    margin-right: 3px;
}
.row.year {
    height: 28px;
    margin-left: -4px;
    gap: 6px;
}
.row.year label {
    width: 196px;
    padding: 0;
}
.spin {
    width: 120px;
    height: 20px;
    display: flex;
    background: #fff;
}
.spin input {
    flex: 1;
    height: 18px;
}
.spin div {
    width: 16px;
    display: grid;
}
.spin button {
    display: flex;
    align-items: center;
    justify-content: center;
    background: #f0f0f0;
    border-right: 1px solid #808080;
    border-bottom: 1px solid #808080;
}
.about {
    display: flex;
    flex-direction: column;
    margin-left: -4px;
}
.about label {
    line-height: 16px;
}
.about textarea {
    height: 55px;
    margin: 1px 0 0 2px;
    background: #fff;
    resize: none;
}
.footer {
    display: flex;
    justify-content: flex-end;
    gap: 3px;
    margin-top: 1px;
    padding: 8px 2px 6px;
    border: 1px solid #fff;
    border-top-color: #a0a0a0;
    border-left-color: #a0a0a0;
}
.footer button {
    width: 85px;
    height: 26px;
    border: 1px solid #fff;
    border-right: 2px solid #707070;
    border-bottom: 2px solid #707070;
}

/* status bar */
.status {
    height: 13px;
    flex: none;
    display: grid;
    grid-template-columns: 300px 1fr 33px;
    gap: 3px;
    padding-left: 89px;
    overflow: hidden;
}
.status div {
    height: 20px;
    padding: 5px 2px 0;
    border-top: 1px solid #a0a0a0;
    border-left: 1px solid #a0a0a0;
    border-right: 1px solid #fff;
}
```
